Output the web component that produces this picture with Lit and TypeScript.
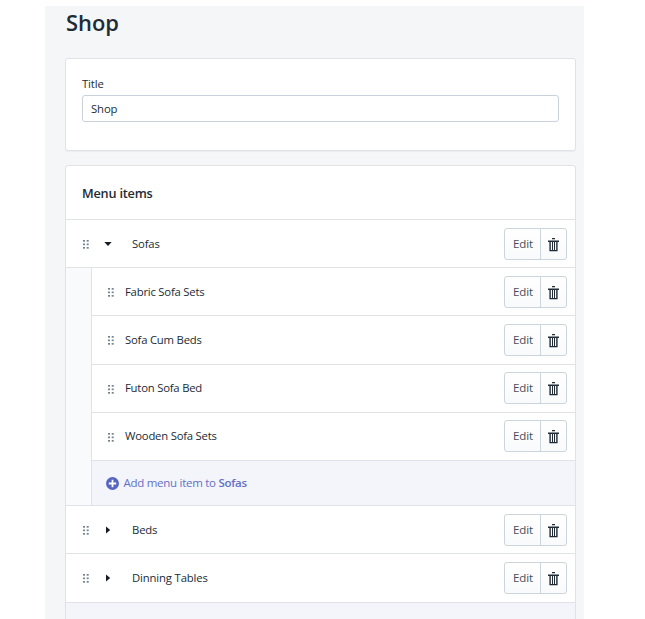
import { LitElement, html, css, svg } from "lit";
import { customElement, property } from "lit/decorators.js";

const grip = html`<svg class="grip" width="6" height="9" viewBox="0 0 6 9">
  ${[0, 3.5, 7].map((y) => svg`<rect x="0" y=${y} width="2" height="1.7"/><rect x="3.7" y=${y} width="2" height="1.7"/>`)}
</svg>`;

const trash = html`<svg width="11" height="14" viewBox="0 0 11 14">
  <path fill="#212b36" d="M4 0h3v1.3h-3zM0 2.5h11v1.6h-11z"/>
  <path fill="none" stroke="#212b36" stroke-width="1.4" d="M2.1 4v8.6h6.8V4"/>
  <path fill="none" stroke="#212b36" stroke-width="1" d="M4.5 4v8.5M6.5 4v8.5"/>
</svg>`;

@customElement("row-actions")
export class RowActions extends LitElement {
  static styles = css`
    :host { display: block; margin-left: auto; }
    .group {
      display: flex; box-sizing: border-box; width: 63px; height: 32px;
      border: 1px solid #ccd4dc; border-radius: 3px;
      background: linear-gradient(#fff, #f9fafb);
    }
    button {
      display: flex; align-items: center; justify-content: center; padding: 0; border: 0;
      background: none; color: #454f5b; font: 11.5px "Open Sans", sans-serif;
    }
    .edit { box-sizing: border-box; width: 36px; border-right: 1px solid #ccd4dc; flex: none; padding: 0 0 1px 1px; letter-spacing: -0.15px; }
    .remove { flex: 1; padding: 2px 1px 0 0; }
  `;
  render() {
    return html`<div class="group">
      <button class="edit">Edit</button>
      <button class="remove" aria-label="Delete">${trash}</button>
    </div>`;
  }
}

@customElement("menu-row")
export class MenuRow extends LitElement {
  @property() label = "";
  @property() kind = "child";
  static styles = css`
    :host { display: block; }
    .row {
      display: flex; align-items: center; box-sizing: border-box; height: 48.2px;
      padding: 0 8px 0 16px; border-top: 1px solid #dfe3e8; background: #fff;
    }
    .parent { padding-left: 17px; }
    .grip { fill: #75838f; margin-top: 2px; flex: none; }
    .arrow { width: 8px; height: 8px; margin: 1px 20px 0 15px; fill: #161d25; flex: none; }
    .label { font: 11.3px "Open Sans", sans-serif; color: #212b36; letter-spacing: -0.21px; margin: 0 0 1px 11px; white-space: nowrap; }
    .parent .label { margin-left: 0; letter-spacing: -0.15px; }
  `;
  render() {
    const path = this.kind === "open" ? "M.3 2h7.4L4 6z" : "M2 .4v7.2L6.2 4z";
    const parent = this.kind !== "child";
    return html`<div class="row ${parent ? "parent" : ""}">
      ${grip}
      ${parent ? html`<svg class="arrow" viewBox="0 0 8 8"><path d=${path} /></svg>` : ""}
      <span class="label">${this.label}</span>
      <row-actions></row-actions>
    </div>`;
  }
}

@customElement("add-row")
export class AddRow extends LitElement {
  @property() target = "";
  static styles = css`
    :host { display: block; }
    .row {
      display: flex; align-items: center; box-sizing: border-box; height: 45.2px; padding-left: 13.5px;
      border-top: 1px solid #dfe3e8; background: #f4f5fa;
      color: #6370c4; font: 11.5px "Open Sans", sans-serif; letter-spacing: -0.28px; white-space: pre;
    }
    svg { margin: 1px 5px 0 0; }
    span { margin-bottom: 1px; }
    b { font-weight: 600; }
  `;
  render() {
    return html`<div class="row">
      <svg width="13" height="13" viewBox="0 0 13 13">
        <circle cx="6.5" cy="6.5" r="6.5" fill="#5665bf" />
        <path d="M6.5 2.8v7.4M2.8 6.5h7.4" stroke="#fff" stroke-width="1.8" />
      </svg>${this.target ? html`<span>Add menu item to <b>${this.target}</b></span>` : ""}
    </div>`;
  }
}

@customElement("app-root")
export class AppRoot extends LitElement {
  static styles = css`
    :host { display: flow-root; height: 619px; overflow: hidden; background: #fff; font-family: "Open Sans", sans-serif; color: #212b36; }
    .page { box-sizing: border-box; width: 539px; height: 613px; margin: 6px 0 0 45px; padding: 0 8px 0 20px; background: #f4f6f8; overflow: hidden; }
    h1 { margin: 0; height: 52px; padding-left: 1px; font-size: 21.9px; line-height: 34px; font-weight: 600; box-sizing: border-box; }
    .card { box-sizing: border-box; border: 1px solid #dfe3e8; border-radius: 3px; background: #fff; overflow: hidden; box-shadow: 0 1px 1px rgba(63, 63, 68, .05); }
    .details { height: 93px; padding: 17px 16px; margin-bottom: 14px; }
    label { display: block; font-size: 11.3px; line-height: 16px; letter-spacing: -0.1px; }
    input {
      display: block; box-sizing: border-box; width: 477px; height: 27px; margin-top: 3px; padding: 0 8px 1px;
      border: 1px solid #c9d1da; border-radius: 3px; font: 11.3px "Open Sans", sans-serif; letter-spacing: -0.1px; color: #212b36; outline: 0;
    }
    h2 { margin: 0; height: 53px; padding-left: 16px; font-size: 12.7px; line-height: 54px; font-weight: 600; letter-spacing: -0.2px; }
    .children { padding-left: 25px; background: #f9fafb; border-top: 1px solid #dfe3e8; }
    .list { border-left: 1px solid #dfe3e8; margin-top: -1px; }
  `;
  render() {
    return html`<main class="page">
      <h1>Shop</h1>
      <section class="card details">
        <label for="title">Title</label>
        <input id="title" value="Shop" />
      </section>
      <section class="card">
        <h2>Menu items</h2>
        <menu-row kind="open" label="Sofas"></menu-row>
        <div class="children"><div class="list">
          ${["Fabric Sofa Sets", "Sofa Cum Beds", "Futon Sofa Bed", "Wooden Sofa Sets"].map(
            (name) => html`<menu-row label=${name}></menu-row>`
          )}
          <add-row target="Sofas"></add-row>
        </div></div>
        <menu-row kind="closed" label="Beds"></menu-row>
        <menu-row kind="closed" label="Dinning Tables"></menu-row>
        <add-row></add-row>
      </section>
    </main>`;
  }
}
